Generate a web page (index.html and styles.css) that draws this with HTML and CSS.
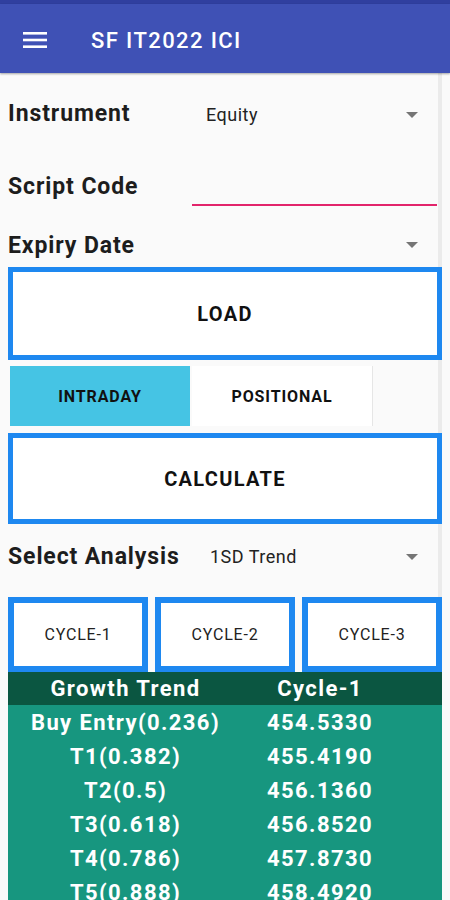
FILE: index.html
```html
<!DOCTYPE html>
<html>
<head>
<meta charset="utf-8">
<link rel="stylesheet" href="styles.css">
</head>
<body>
<div class="status"></div>
<header class="appbar">
  <svg class="menu" width="26" height="20" viewBox="0 0 26 20"><rect x="1" y="2" width="24" height="2.6" fill="#fff"/><rect x="1" y="8.7" width="24" height="2.6" fill="#fff"/><rect x="1" y="15.4" width="24" height="2.6" fill="#fff"/></svg>
  <span class="title">SF IT2022 ICI</span>
</header>
<main class="content">
  <div class="row row-instrument">
    <span class="label">Instrument</span>
    <div class="spinner spinner-instrument"><span class="value">Equity</span><span class="arrow"></span></div>
  </div>
  <div class="row row-script">
    <span class="label">Script Code</span>
    <div class="input"></div>
  </div>
  <div class="row row-expiry">
    <span class="label">Expiry Date</span>
    <div class="spinner spinner-expiry"><span class="value"></span><span class="arrow"></span></div>
  </div>
  <div class="bigbtn btn-load">LOAD</div>
  <div class="tabs">
    <div class="tab active">INTRADAY</div>
    <div class="tab">POSITIONAL</div>
  </div>
  <div class="bigbtn btn-calc">CALCULATE</div>
  <div class="row row-analysis">
    <span class="label">Select Analysis</span>
    <div class="spinner spinner-analysis"><span class="value">1SD Trend</span><span class="arrow"></span></div>
  </div>
  <div class="cycles">
    <div class="cycle">CYCLE-1</div>
    <div class="cycle">CYCLE-2</div>
    <div class="cycle">CYCLE-3</div>
  </div>
  <div class="table">
    <div class="trow thead"><span>Growth Trend</span><span>Cycle-1</span></div>
    <div class="trow"><span>Buy Entry(0.236)</span><span>454.5330</span></div>
    <div class="trow"><span>T1(0.382)</span><span>455.4190</span></div>
    <div class="trow"><span>T2(0.5)</span><span>456.1360</span></div>
    <div class="trow"><span>T3(0.618)</span><span>456.8520</span></div>
    <div class="trow"><span>T4(0.786)</span><span>457.8730</span></div>
    <div class="trow"><span>T5(0.888)</span><span>458.4920</span></div>
  </div>
</main>
</body>
</html>
```
FILE: styles.css
```css
* { box-sizing: border-box; }
html, body { margin: 0; padding: 0; }
body {
  background: linear-gradient(to right, #fafafa 438px, #ebebeb 438px, #ebebeb 442px, #fafafa 442px);
  font-family: Roboto, "Liberation Sans", sans-serif;
  color: #212121;
  width: 450px;
  height: 900px;
  overflow: hidden;
}
.status { height: 4px; background: #303f9f; }
.appbar {
  height: 69px;
  background: #3f51b5;
  display: flex;
  align-items: center;
  padding-left: 22px;
  box-shadow: 0 1px 2px rgba(0,0,0,0.35);
  position: relative;
}
.menu { display: block; margin-top: 2px; }
.title {
  color: #fff;
  font-size: 22px;
  font-weight: 500;
  letter-spacing: 1.4px;
  margin-left: 43px;
  margin-top: 3px;
}
.content {
  padding: 0 8px;
  width: 450px;
  margin-top: 1px;
}
.row { display: flex; align-items: center; }
.label {
  font-size: 23px;
  font-weight: 700;
  letter-spacing: 0.9px;
  color: #1d1d1d;
}
.row-instrument { height: 78px; }
.row-script { height: 68px; }
.row-expiry { height: 47px; padding-top: 3px; }
.row-analysis { height: 73px; padding-bottom: 8px; }
.spinner { display: flex; align-items: center; margin-left: auto; }
.spinner .value { font-size: 18px; color: #222; letter-spacing: 0.5px; }
.arrow {
  width: 0; height: 0;
  border-left: 6px solid transparent;
  border-right: 6px solid transparent;
  border-top: 6px solid #757575;
  margin-left: auto;
  margin-right: 24px;
}
.spinner-instrument { width: 242px; padding-left: 6px; margin-top: 3px; }
.spinner-expiry { width: 242px; }
.spinner-analysis { width: 232px; }
.input {
  margin-left: auto;
  width: 245px;
  height: 2px;
  background: #e2246b;
  margin-right: 5px;
  align-self: flex-start;
  margin-top: 52px;
}
.bigbtn {
  border: 5px solid #1e88f0;
  background: #fff;
  display: flex;
  align-items: center;
  justify-content: center;
  font-size: 20px;
  font-weight: 700;
  letter-spacing: 1.3px;
  color: #111;
}
.btn-load { height: 93px; }
.btn-calc { height: 91px; margin-top: 7px; }
.tabs { display: flex; gap: 2px; margin: 6px 0 0 2px; height: 60px; }
.tab {
  width: 181px;
  display: flex;
  align-items: center;
  justify-content: center;
  font-size: 16px;
  font-weight: 700;
  letter-spacing: 0.9px;
  background: #fff;
  color: #111;
  border-right: 1px solid #e6e6e6;
}
.tab.active { width: 180px; background: #45c4e4; border-right: none; }
.cycles { display: flex; gap: 7px; }
.cycle {
  width: 140px;
  height: 75px;
  border: 6px solid #1e88f0;
  background: #fff;
  display: flex;
  align-items: center;
  justify-content: center;
  font-size: 16px;
  color: #222;
  letter-spacing: 0.8px;
}
.table { background: #17967f; height: 240px; }
.trow {
  display: grid;
  grid-template-columns: 235px 154px;
  height: 34px;
  align-items: center;
  color: #fff;
  font-size: 22px;
  font-weight: 700;
  letter-spacing: 1.4px;
}
.trow span { text-align: center; }
.thead { background: #0b5641; height: 33px; font-size: 22px; letter-spacing: 1.4px; }
```
